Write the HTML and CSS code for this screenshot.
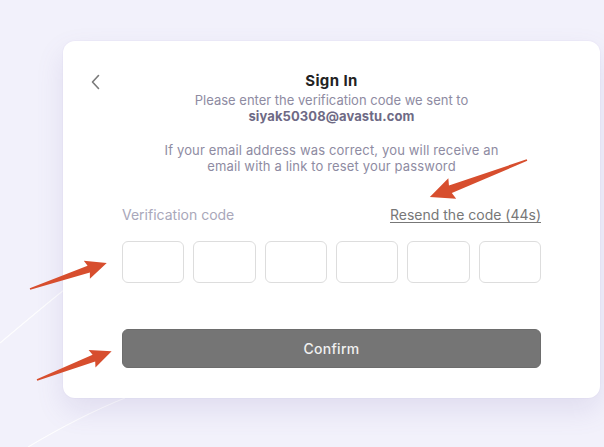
FILE: index.html
```html
<!DOCTYPE html>
<html>
<head>
<meta charset="utf-8">
<link rel="stylesheet" href="styles.css">
</head>
<body>
<svg class="bg-lines" width="604" height="447" viewBox="0 0 604 447">
  <path d="M0 343 C 25 322, 45 305, 64 290" />
  <path d="M28 447 C 60 428, 95 410, 125 398" />
</svg>
<div class="page">
  <div class="card">
    <div class="header">
      <button class="back" aria-label="Back">
        <svg width="12" height="16" viewBox="0 0 12 16"><path d="M8.5 1.5 L2.5 8 L8.5 14.5" /></svg>
      </button>
      <h1 class="title">Sign In</h1>
      <span></span>
    </div>
    <p class="subtitle">Please enter the verification code we sent to<br><strong class="email">siyak50308@avastu.com</strong></p>
    <p class="note">If your email address was correct, you will receive an<br>email with a link to reset your password</p>
    <div class="label-row">
      <span class="label">Verification code</span>
      <a class="resend" href="#">Resend the code (44s)</a>
    </div>
    <div class="codes">
      <div class="code"></div>
      <div class="code"></div>
      <div class="code"></div>
      <div class="code"></div>
      <div class="code"></div>
      <div class="code"></div>
    </div>
    <button class="confirm">Confirm</button>
  </div>
</div>
<svg class="arrows" width="604" height="447" viewBox="0 0 604 447">
  <g transform="translate(30 289) rotate(-18.66)">
    <polygon points="0,-0.8 62,-3.6 60,-9.5 81,0 60,9.5 62,3.6 0,0.8" />
  </g>
  <g transform="translate(37 380) rotate(-21.1)">
    <polygon points="0,-0.8 61,-3.6 59,-9.5 80,0 59,9.5 61,3.6 0,0.8" />
  </g>
  <g transform="translate(527 160) rotate(159.1)">
    <polygon points="0,-0.8 82,-4 80,-11 104,0 80,11 82,4 0,0.8" />
  </g>
</svg>
</body>
</html>
```

FILE: styles.css
```css
* { box-sizing: border-box; }
html, body {
  margin: 0;
  padding: 0;
  width: 604px;
  height: 447px;
  overflow: hidden;
  background: #f2f1fb;
  font-family: "Inter", "Open Sans", sans-serif;
}
.bg-lines {
  position: absolute;
  left: 0;
  top: 0;
  fill: none;
  stroke: #ffffff;
  stroke-width: 1.2;
  opacity: 0.9;
}
.page {
  position: relative;
  padding: 41px 4px 0 63px;
}
.card {
  width: 537px;
  height: 357px;
  background: #ffffff;
  border-radius: 12px;
  box-shadow: 0 12px 28px rgba(110, 100, 170, 0.14), 0 0 0 1px rgba(120, 110, 180, 0.03);
  padding: 30px 59px 30px 59px;
  display: flex;
  flex-direction: column;
}
.header {
  display: grid;
  grid-template-columns: 1fr auto 1fr;
  align-items: center;
  margin: 0 -59px 0 -59px;
  padding: 0 27px;
  height: 20px;
}
.back {
  background: none;
  border: 0;
  padding: 0;
  width: 12px;
  height: 16px;
  justify-self: start;
  display: flex;
  margin-top: 2px;
}
.back path {
  fill: none;
  stroke: #7a7a7a;
  stroke-width: 1.6;
  stroke-linecap: round;
  stroke-linejoin: round;
}
.title {
  margin: 0;
  font-size: 15px;
  letter-spacing: 0.4px;
  font-weight: 700;
  color: #222222;
  line-height: 20px;
}
.subtitle {
  margin: 1px 0 0 0;
  text-align: center;
  font-size: 13px;
  line-height: 16px;
  color: #8e8ba2;
}
.email {
  font-weight: 700;
  color: #6e6a85;
  letter-spacing: 0.1px;
}
.note {
  margin: 18px 0 0 0;
  text-align: center;
  font-size: 13px;
  line-height: 16px;
  letter-spacing: 0.15px;
  color: #8e8ba2;
}
.label-row {
  display: flex;
  justify-content: space-between;
  align-items: center;
  margin-top: 33px;
  height: 16px;
  font-size: 14px;
  line-height: 16px;
}
.label { color: #a9a7ba; }
.resend {
  color: #777777;
  text-decoration: underline;
  text-underline-offset: 2px;
}
.codes {
  display: grid;
  grid-template-columns: repeat(6, 1fr);
  gap: 9px;
  margin-top: 18px;
}
.code {
  height: 42px;
  border: 1px solid #dddddd;
  border-radius: 6px;
}
.confirm {
  margin-top: 46px;
  height: 40px;
  width: 100%;
  background: #757575;
  border: 1px solid #6d6d6d;
  border-radius: 6px;
  color: #f0f0f0;
  font-family: inherit;
  font-size: 14px;
  font-weight: 500;
  letter-spacing: 0.3px;
}
.arrows {
  position: absolute;
  left: 0;
  top: 0;
  pointer-events: none;
}
.arrows polygon {
  fill: #d74e2e;
}
```
